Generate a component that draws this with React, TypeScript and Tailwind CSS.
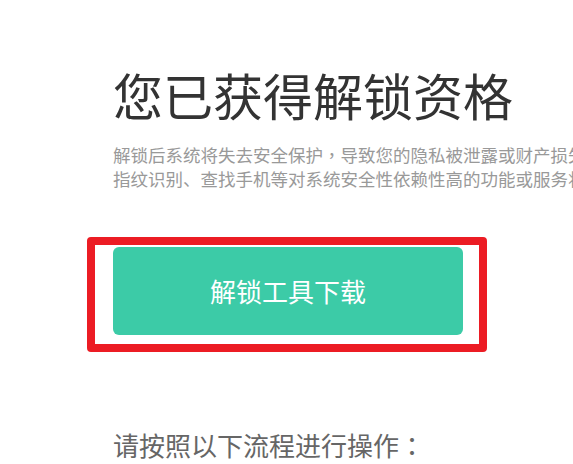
const font = { fontFamily: '"Microsoft YaHei", "Noto Sans CJK SC", sans-serif' };
// centred full-width punctuation, as in the reference
const punct = { fontFamily: '"Noto Sans CJK TC", "Noto Sans CJK SC", sans-serif' };

export default function App() {
  return (
    <div className="w-[573px] h-[464px] overflow-hidden bg-white" style={font}>
      <div className="pl-[113px] pt-[69px]">
        <h1 className="text-[50px] leading-[50px] text-[#333333] whitespace-nowrap font-normal">
          您已获得解锁资格
        </h1>
        <p className="mt-[24px] text-[17.5px] leading-[24px] text-[#999999] whitespace-nowrap">
          解锁后系统将失去安全保护<span style={punct}>，</span>导致您的隐私被泄露或财产损失
          <br />
          指纹识别、查找手机等对系统安全性依赖性高的功能或服务将无法使用
        </p>
        <div className="relative mt-[56px] w-[350px]">
          <button className="w-[350px] h-[88px] rounded-[6px] bg-[#3ccba7] text-white text-[26px] leading-none">
            解锁工具下载
          </button>
          <div className="absolute left-[-26px] top-[-10px] w-[400px] h-[115px] border-[8px] border-[#ec1c24] rounded-[4px] pointer-events-none" />
        </div>
        <h2 className="mt-[97px] text-[26px] leading-[26px] text-[#666666] whitespace-nowrap font-normal">
          请按照以下流程进行操作<span style={punct}>：</span>
        </h2>
      </div>
    </div>
  );
}
